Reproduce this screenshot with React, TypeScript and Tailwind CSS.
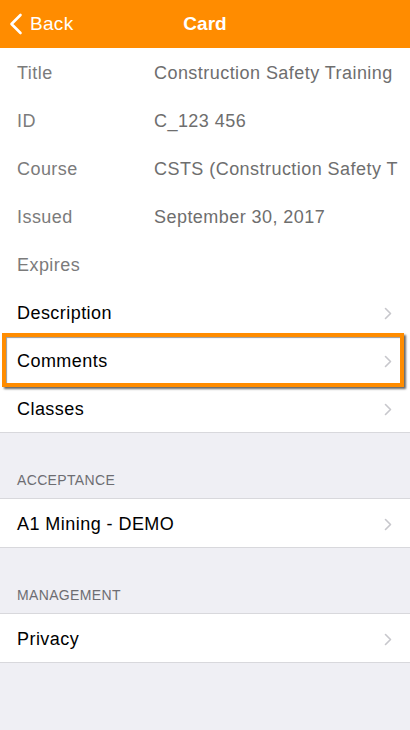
const details = [
  { label: 'Title', value: 'Construction Safety Training' },
  { label: 'ID', value: 'C_123 456' },
  { label: 'Course', value: 'CSTS (Construction Safety T' },
  { label: 'Issued', value: 'September 30, 2017' },
  { label: 'Expires', value: '' },
]

function Chevron() {
  return (
    <svg width="8" height="13" viewBox="0 0 8 13" fill="none" className="shrink-0">
      <path d="M1.5 1.5l5 5-5 5" stroke="#c7c7cc" strokeWidth="1.6" strokeLinecap="round" strokeLinejoin="round" />
    </svg>
  )
}

function LinkRow({ label, highlight }: { label: string; highlight?: boolean }) {
  return (
    <div className="relative h-[48px] flex items-center pl-[17px] pr-[18px] pt-[3px] bg-white">
      <span className="flex-1 text-[18px] tracking-[0.45px] text-black">{label}</span>
      <Chevron />
      {highlight && (
        <div className="absolute z-10 left-[2px] right-[6px] -top-[3px] -bottom-[3px] border-[4px] border-[#ff8c00] shadow-[2px_2px_2px_rgba(0,0,0,0.6),inset_1px_1px_1px_rgba(0,0,0,0.4)]" />
      )}
    </div>
  )
}

function SectionHeader({ title }: { title: string }) {
  return (
    <div className="h-[65px] flex items-end px-[17px] pb-[7px] text-[14px] text-[#6d6d72] tracking-wide">
      {title}
    </div>
  )
}

export default function App() {
  return (
    <div className="w-[410px] h-[730px] bg-[#efeff4] overflow-hidden" style={{ fontFamily: '"Liberation Sans", Arial, sans-serif' }}>
      {/* Nav bar */}
      <div className="h-[48px] bg-[#ff8c00] flex items-center relative">
        <div className="flex items-center pl-[9px] text-white">
          <svg width="14" height="22" viewBox="0 0 14 22" fill="none">
            <path d="M11.5 2L2.5 11l9 9" stroke="white" strokeWidth="2.6" strokeLinecap="round" strokeLinejoin="round" />
          </svg>
          <span className="text-[19px] ml-[7px] tracking-[0.3px]">Back</span>
        </div>
        <div className="absolute inset-x-0 text-center text-white text-[19px] font-bold pointer-events-none">Card</div>
      </div>

      {/* Details */}
      <div className="bg-white border-b border-[#d8d8dc]">
        {details.map((d) => (
          <div key={d.label} className="h-[48px] flex items-center pl-[17px] pt-[3px]">
            <span className="w-[137px] shrink-0 text-[18px] tracking-[0.45px] text-[#7b7b7b]">{d.label}</span>
            <span className="flex-1 overflow-hidden whitespace-nowrap text-[18px] tracking-[0.45px] text-[#6e6e6e]">{d.value}</span>
          </div>
        ))}
        <LinkRow label="Description" />
        <LinkRow label="Comments" highlight />
        <LinkRow label="Classes" />
      </div>

      <SectionHeader title="ACCEPTANCE" />
      <div className="border-y border-[#d8d8dc]">
        <LinkRow label="A1 Mining - DEMO" />
      </div>

      <SectionHeader title="MANAGEMENT" />
      <div className="border-y border-[#d8d8dc]">
        <LinkRow label="Privacy" />
      </div>
    </div>
  )
}
